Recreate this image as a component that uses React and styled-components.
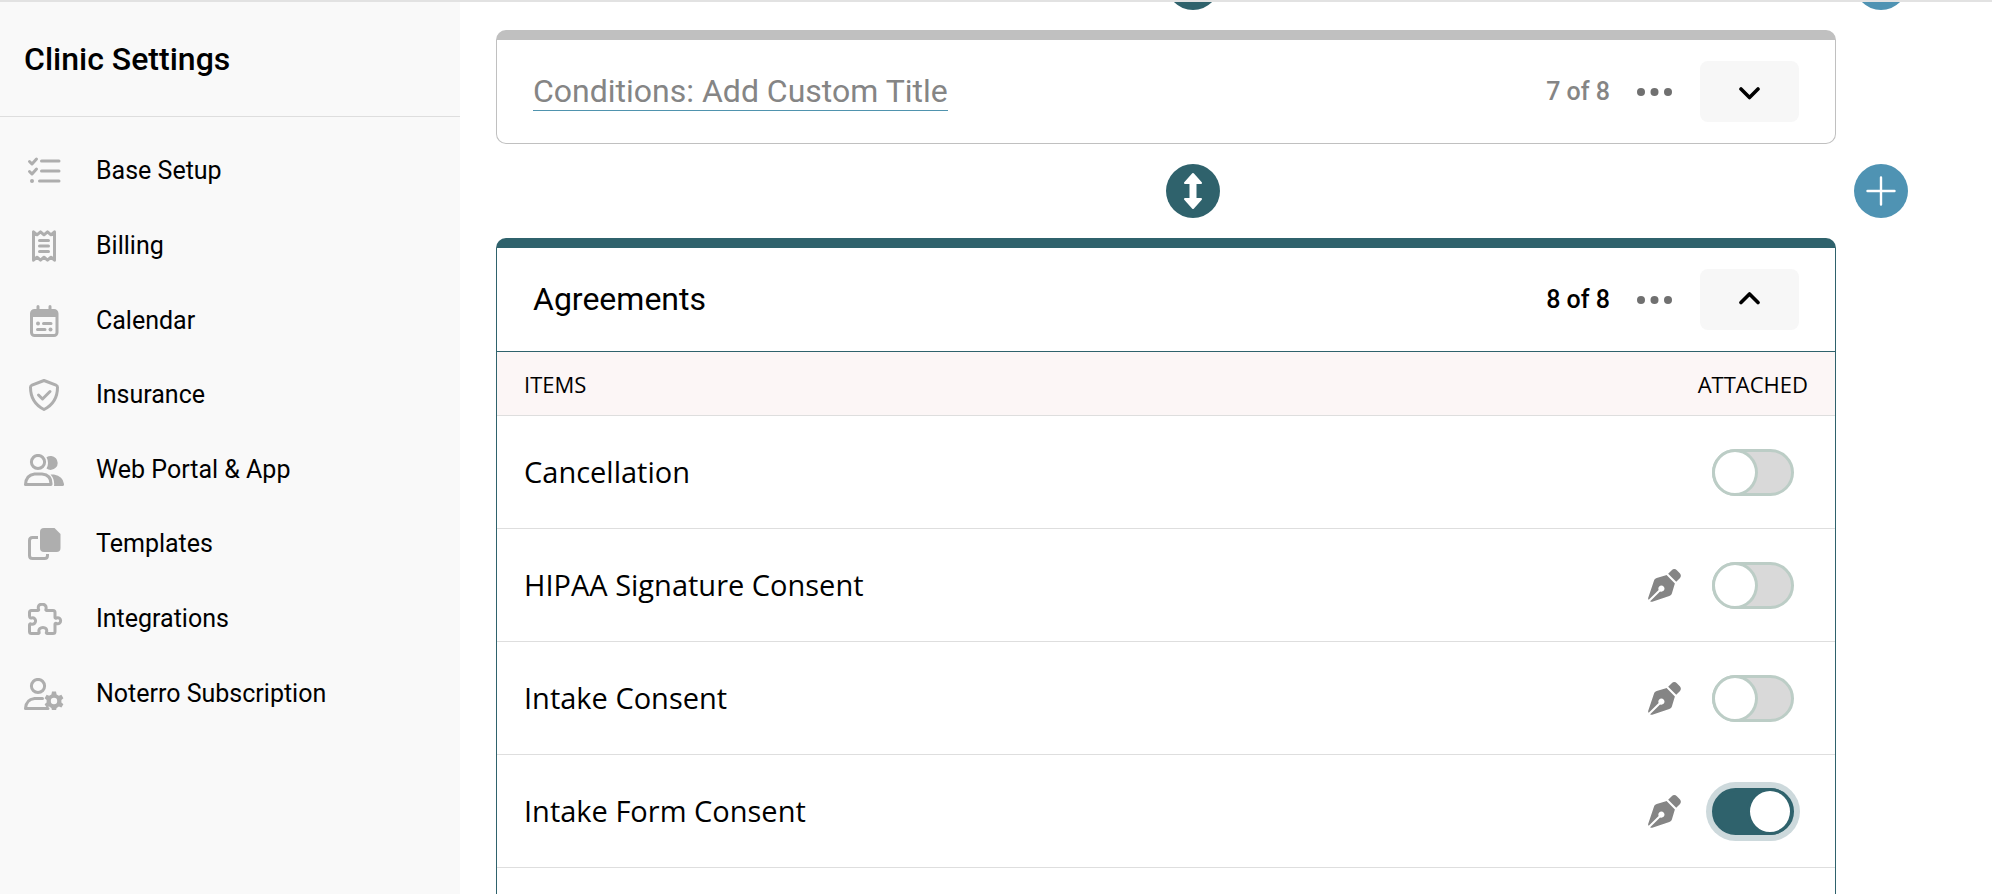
import React from "react";
import styled, { createGlobalStyle, css } from "styled-components";
import { FaPenNib } from "react-icons/fa6";

const teal = "#2f626c";

const GlobalStyle = createGlobalStyle`
  *, *::before, *::after { box-sizing: border-box; }
  body { margin: 0; background: #fff; color: #000; font-family: Roboto, sans-serif; }
  button { font: inherit; color: inherit; border: 0; padding: 0; cursor: pointer; }
  h1, h2, ul { margin: 0; padding: 0; }
`;

const Page = styled.div`
  display: flex;
  height: 100vh;
  overflow: hidden;
  border-top: 2px solid #e2e2e2;
`;

const Sidebar = styled.aside`
  flex: 0 0 460px;
  background: #f9f9f9;
`;

const SidebarHeader = styled.header`
  display: flex;
  align-items: center;
  height: 115px;
  padding: 0 24px;
  border-bottom: 1px solid #dedede;
`;

const SidebarTitle = styled.h1`
  font-size: 32px;
  line-height: 40px;
  font-weight: 500;
`;

const NavList = styled.ul`
  display: flex;
  flex-direction: column;
  height: 614px;
  padding-top: 17px;
  list-style: none;
`;

const NavItem = styled.li`
  flex: 1;
  display: flex;
`;

const NavLink = styled.a`
  flex: 1;
  display: flex;
  align-items: center;
  gap: 32px;
  padding-left: 24px;
  color: #000;
  font-size: 25px;
  line-height: 32px;
  text-decoration: none;
`;

const NavIcon = styled.svg`
  flex: none;
  width: 40px;
  height: 32px;
  color: #aeaeae;
`;

const Main = styled.main`
  flex: 1;
  min-width: 0;
  overflow: hidden;
`;

const Sections = styled.div`
  display: flex;
  flex-direction: column;
  gap: 20px;
  margin-top: -46px;
  padding: 0 84px 0 36px;
`;

const Separator = styled.div`
  display: grid;
  grid-template-columns: 1fr 54px;
  justify-items: center;
  padding-left: 36px;
`;

const RoundButton = styled.button`
  display: grid;
  place-items: center;
  width: 54px;
  height: 54px;
  border-radius: 50%;
  background: ${(p) => p.$color};
  color: #fff;
`;

const Card = styled.section`
  margin-right: 72px;
  border: 1px solid ${(p) => p.$color};
  border-top-width: 10px;
  border-radius: 10px;
  background: #fff;
`;

const OpenCard = styled(Card)`
  border-bottom: 0;
  border-radius: 10px 10px 0 0;
`;

const CardHeader = styled.header`
  display: flex;
  align-items: center;
  height: 103px;
  padding: 0 36px;
  color: ${(p) => (p.$muted ? "#858585" : "#000")};
`;

const CardTitle = styled.h2`
  margin-right: auto;
  font-size: 32px;
  line-height: 38px;
  font-weight: 400;
  border-bottom: 1px solid ${(p) => (p.$editable ? "#4f93ae" : "transparent")};
`;

const Count = styled.span`
  font-size: 25px;
  line-height: 32px;
  font-weight: 500;
`;

const MoreButton = styled.button`
  display: grid;
  place-items: center;
  width: 36px;
  height: 36px;
  margin: 0 27px;
  background: none;
  color: #707070;
`;

const ToggleButton = styled.button`
  display: grid;
  place-items: center;
  width: 99px;
  height: 61px;
  border-radius: 8px;
  background: #f7f7f7;
  color: #000;
`;

const Table = styled.table`
  width: 100%;
  border-collapse: separate;
  border-spacing: 0;
  border-top: 1px solid ${teal};
  font-family: "Open Sans", sans-serif;
`;

const HeadCell = styled.th`
  height: 64px;
  padding: 0 27px;
  border-bottom: 1px solid #dedede;
  background: #fcf6f6;
  font-size: 22px;
  line-height: 28px;
  font-weight: 400;
  text-align: ${(p) => p.$align || "left"};
`;

const Cell = styled.td`
  height: 113px;
  padding: 0 27px;
  border-bottom: 1px solid #dedede;
  font-size: 29px;
  line-height: 40px;
`;

const Controls = styled.div`
  display: flex;
  align-items: center;
  justify-content: flex-end;
  gap: 31px;
  padding-right: 14px;
`;

const PenIcon = styled(FaPenNib)`
  width: 33px;
  height: 33px;
  color: #858585;
`;

const Switch = styled.input`
  appearance: none;
  display: flex;
  flex: none;
  width: 82px;
  height: 47px;
  margin: 0;
  border-radius: 24px;
  border: 3px solid #bccdc6;
  background: #d9d9d9;
  cursor: pointer;

  &::before {
    content: "";
    width: 46px;
    height: 47px;
    margin: -3px;
    border: 3px solid #bccdc6;
    border-radius: 50%;
    background: #fff;
  }

  ${(p) =>
    p.checked &&
    css`
      justify-content: flex-end;
      border-color: ${teal};
      background: ${teal};
      box-shadow: 0 0 0 6px #cdd9dc;
      &::before {
        margin-right: -2px;
        border-color: ${teal};
      }
    `}
`;

const strokeProps = { fill: "none", stroke: "currentColor", strokeLinecap: "round", strokeLinejoin: "round" };

const icons = {
  tasks: (
    <g {...strokeProps} strokeWidth="3">
      <path d="M5.500 6.500l2.500 2.500L12.500 4M5.500 16.500l2.500 2.500L12.500 14M17.500 6h17.500M17.500 16h17.500M15.500 26h19.500" />
      <circle cx="8" cy="26" r="2" fill="currentColor" stroke="none" />
    </g>
  ),
  receipt: (
    <g {...strokeProps} strokeWidth="3">
      <path d="M9.500 1.800v28.400l3.500-3 3.500 3 3.500-3 3.500 3 3.500-3 3.500 3V1.800l-3.500 3-3.500-3-3.500 3-3.500-3-3.500 3z" />
      <path d="M15.500 10.500h9M15.500 16h9M15.500 21.500h9" />
    </g>
  ),
  calendar: (
    <g {...strokeProps} strokeWidth="3">
      <path d="M14 1.500v4M26 1.500v4" />
      <rect x="7.500" y="5.500" width="25.500" height="25" rx="3" />
      <path d="M8 5.500h24.500v6.500H8z" fill="currentColor" stroke="none" />
      <path d="M19.500 18.500h7.500M13.500 24.500h7.500" />
      <circle cx="14" cy="18.500" r="2" fill="currentColor" stroke="none" />
      <circle cx="26.500" cy="24.500" r="2" fill="currentColor" stroke="none" />
    </g>
  ),
  shield: (
    <g {...strokeProps} strokeWidth="3">
      <path d="M20 1.500l12 4.600q1.500.6 1.500 2.200C33.500 18 29 26 20 30.500 11 26 6.500 18 6.500 8.300q0-1.600 1.500-2.200z" />
      <path d="M14.500 16l4 4 7.500-7.500" />
    </g>
  ),
  people: (
    <g>
      <g {...strokeProps} strokeWidth="3">
        <circle cx="14" cy="8" r="6.600" />
        <path d="M1.500 30.500h25.500q.5-9.500-9-10.500h-7.500q-8.500 1-9 10.500z" />
      </g>
      <path d="M22.500 3.300A7 7 0 1 1 22.500 14.500Q25.500 9 22.500 3.300zM26.500 20.500h3.500q9 1.500 10 9.500.3 2-1.500 2h-8.500q1-6.500-3.500-11.500z" fill="currentColor" />
    </g>
  ),
  copy: (
    <g>
      <path d="M20 0h10.500l6 6v14q0 4-4 4H20q-4 0-4-4V4q0-4 4-4z" fill="currentColor" />
      <path d="M14 9.500H8.500q-3 0-3 3v15q0 3 3 3h12q3 0 3-3v-1.500" {...strokeProps} strokeWidth="3" strokeLinecap="butt" />
    </g>
  ),
  puzzle: (
    <path
      d="M5.500 12.500V9.500q0-2 2-2h6.500q1 0 .5-1.500c-2-6.500 9-6.500 7.500 0q-.5 1.500.5 1.500h6.500q2 0 2 2v5q0 1 1.500.5c5.500-1.500 5.500 7 0 5.500q-1.500-.5-1.500.5v7.500q0 2-2 2h-6q-1 0-.5-1.500c2-6-9-6-7.500 0q.5 1.500-.5 1.500h-7q-2 0-2-2v-6.500q0-1.500 1.500-1c6 1.500 6-7.500.5-6q-2 .5-2-2.500z"
      {...strokeProps}
      strokeWidth="3"
    />
  ),
  userGear: (
    <g>
      <g {...strokeProps} strokeWidth="3">
        <circle cx="14" cy="8" r="6.600" />
        <path d="M18.500 20.500h-8q-8.500 1-9 10h22.500" />
      </g>
      <path
        d="M28 13.500h4l.6 3 2.300 1.300 2.500-1 2 3.400-2 1.800v2.400l2 1.800-2 3.400-2.500-1-2.300 1.300-.6 2.600h-4l-.6-2.600-2.300-1.300-2.500 1-2-3.400 2-1.800V22l-2-1.800 2-3.400 2.500 1 2.300-1.300zM30 19.800a3.200 3.200 0 1 0 0 6.400 3.200 3.200 0 0 0 0-6.400z"
        fill="currentColor"
        fillRule="evenodd"
      />
    </g>
  ),
};

const navItems = [
  ["Base Setup", "tasks"],
  ["Billing", "receipt"],
  ["Calendar", "calendar"],
  ["Insurance", "shield"],
  ["Web Portal & App", "people"],
  ["Templates", "copy"],
  ["Integrations", "puzzle"],
  ["Noterro Subscription", "userGear"],
];

const agreements = [
  { name: "Cancellation" },
  { name: "HIPAA Signature Consent", signed: true },
  { name: "Intake Consent", signed: true },
  { name: "Intake Form Consent", signed: true, attached: true },
];

function SectionSeparator() {
  return (
    <Separator>
      <RoundButton $color={teal} type="button" aria-label="Move section">
        <svg width="20" height="38" viewBox="0 0 20 38">
          <path
            d="M10 2l8 9h-5.500v16H18l-8 9-8-9h5.500V11H2z"
            fill="currentColor"
            stroke="currentColor"
            strokeWidth="2"
            strokeLinejoin="round"
          />
        </svg>
      </RoundButton>
      <RoundButton $color="#4f93b3" type="button" aria-label="Add section">
        <svg width="30" height="30" viewBox="0 0 30 30">
          <path d="M15 1.500v27M1.500 15h27" {...strokeProps} strokeWidth="2.400" />
        </svg>
      </RoundButton>
    </Separator>
  );
}

function SectionHeader({ title, count, muted, open }) {
  return (
    <CardHeader $muted={muted}>
      <CardTitle $editable={muted}>{title}</CardTitle>
      <Count>{count}</Count>
      <MoreButton type="button" aria-label="More options">
        <svg width="36" height="8" viewBox="0 0 36 8" fill="currentColor">
          <circle cx="4" cy="4" r="4" />
          <circle cx="17.500" cy="4" r="4" />
          <circle cx="31" cy="4" r="4" />
        </svg>
      </MoreButton>
      <ToggleButton type="button" aria-label={open ? "Collapse" : "Expand"} aria-expanded={!!open}>
        <svg width="24" height="16" viewBox="0 0 24 16">
          <path d={open ? "M3 10.500l8.500-8.500 8.500 8.500" : "M3 5l8.500 8.500L20 5"} {...strokeProps} strokeWidth="3.600" />
        </svg>
      </ToggleButton>
    </CardHeader>
  );
}

export default function App() {
  const [attached, setAttached] = React.useState(agreements.map((a) => !!a.attached));
  const flip = (i) => setAttached((list) => list.map((v, n) => (n === i ? !v : v)));

  return (
    <>
      <GlobalStyle />
      <Page>
        <Sidebar>
          <SidebarHeader>
            <SidebarTitle>Clinic Settings</SidebarTitle>
          </SidebarHeader>
          <nav aria-label="Clinic settings">
            <NavList>
              {navItems.map(([label, icon]) => (
                <NavItem key={label}>
                  <NavLink href="#">
                    <NavIcon viewBox="0 0 40 32" aria-hidden="true">{icons[icon]}</NavIcon>
                    {label}
                  </NavLink>
                </NavItem>
              ))}
            </NavList>
          </nav>
        </Sidebar>
        <Main>
          <Sections>
            <SectionSeparator />
            <Card $color="#c0c0c0">
              <SectionHeader title="Conditions: Add Custom Title" count="7 of 8" muted />
            </Card>
            <SectionSeparator />
            <OpenCard $color={teal}>
              <SectionHeader title="Agreements" count="8 of 8" open />
              <Table>
                <thead>
                  <tr>
                    <HeadCell scope="col">ITEMS</HeadCell>
                    <HeadCell scope="col" $align="right">ATTACHED</HeadCell>
                  </tr>
                </thead>
                <tbody>
                  {agreements.map((item, i) => (
                    <tr key={item.name}>
                      <Cell>
                        <label htmlFor={`agreement-${i}`}>{item.name}</label>
                      </Cell>
                      <Cell>
                        <Controls>
                          {item.signed && <PenIcon />}
                          <Switch
                            id={`agreement-${i}`}
                            type="checkbox"
                            role="switch"
                            checked={attached[i]}
                            onChange={() => flip(i)}
                          />
                        </Controls>
                      </Cell>
                    </tr>
                  ))}
                  <tr>
                    <Cell colSpan={2} />
                  </tr>
                </tbody>
              </Table>
            </OpenCard>
          </Sections>
        </Main>
      </Page>
    </>
  );
}
